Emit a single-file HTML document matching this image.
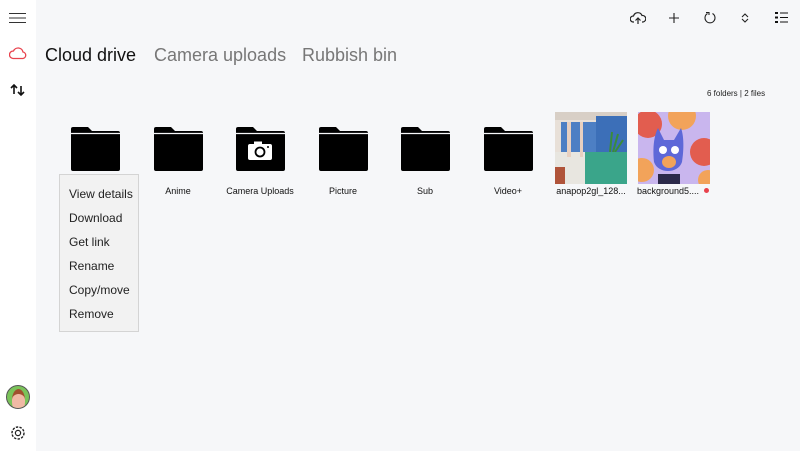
<!DOCTYPE html>
<html><head><style>
body{margin:0;width:800px;height:451px;overflow:hidden;background:#f6f7f9;font-family:"Liberation Sans",sans-serif;position:relative}
.side{position:absolute;left:0;top:0;width:36px;height:451px;background:#fff}
.abs{position:absolute}
.tab{position:absolute;top:45px;font-size:18px;color:#777}
.fold{position:absolute;top:127px;width:49px;height:44px}
.lbl{position:absolute;top:186px;font-size:9px;color:#111;text-align:center;width:80px}
.menu{position:absolute;left:59px;top:174px;width:78px;height:156px;background:#f2f2f2;border:1px solid #d4d4d4}
.menu div{position:absolute;left:9px;font-size:12px;color:#222}
</style></head><body>
<div class="side"></div>
<svg class="abs" style="left:9px;top:12px" width="18" height="12"><path d="M0 1.5H17M0 6H17M0 10.5H17" stroke="#333" stroke-width="1.1"/></svg>
<svg class="abs" style="left:9px;top:46px" width="18" height="14"><path d="M4 12.5H14A3.3 3.3 0 0 0 14 6 5 5 0 0 0 4.5 5 3.7 3.7 0 0 0 4 12.5Z" fill="none" stroke="#e8424d" stroke-width="1.3"/></svg>
<svg class="abs" style="left:10px;top:83px" width="16" height="14"><path d="M4 11V2M1 5L4 2 7 5M11 3V12M8 9L11 12 14 9" fill="none" stroke="#111" stroke-width="1.6"/></svg>
<div class="abs" style="left:6px;top:385px;width:24px;height:24px;border-radius:50%;background:#7ac35a;border:1px solid #555;box-sizing:border-box;overflow:hidden"><div style="margin:3px 0 0 5px;width:13px;height:17px;background:#f0b9a5;border-radius:50% 50% 40% 40%;border-top:5px solid #a0502e"></div></div>
<svg class="abs" style="left:9px;top:424px" width="18" height="18"><circle cx="9" cy="9" r="2.6" fill="none" stroke="#222" stroke-width="1.2"/><circle cx="9" cy="9" r="6" fill="none" stroke="#222" stroke-width="1.4" stroke-dasharray="2.4 1.3"/></svg>

<div class="tab" style="left:45px;color:#111">Cloud drive</div>
<div class="tab" style="left:154px">Camera uploads</div>
<div class="tab" style="left:302px">Rubbish bin</div>

<svg class="abs" style="left:630px;top:11px" width="16" height="14"><path d="M4 11H3A3 3 0 0 1 3.5 5 4.5 4.5 0 0 1 12 4.5 3 3 0 0 1 13 11H12M8 13V7M5.5 9.5L8 7 10.5 9.5" fill="none" stroke="#222" stroke-width="1.2"/></svg>
<svg class="abs" style="left:668px;top:12px" width="12" height="12"><path d="M6 1V11M1 6H11" stroke="#222" stroke-width="1.1"/></svg>
<svg class="abs" style="left:703px;top:11px" width="14" height="14"><path d="M4.5 2.5A5 5 0 1 0 9.5 2.5" fill="none" stroke="#222" stroke-width="1.1"/><path d="M3 1.5H6V4" fill="none" stroke="#222" stroke-width="1.1"/></svg>
<svg class="abs" style="left:740px;top:12px" width="10" height="12"><path d="M2 5L5 2 8 5M2 7L5 10 8 7" fill="none" stroke="#222" stroke-width="1.1"/></svg>
<svg class="abs" style="left:775px;top:12px" width="14" height="12"><path d="M0 1H3M0 5.5H3M0 10H3" stroke="#111" stroke-width="2"/><path d="M5 1H13M5 5.5H13M5 10H13" stroke="#111" stroke-width="1.1"/></svg>

<div class="abs" style="left:707px;top:89px;font-size:8px;color:#222">6 folders | 2 files</div>

<svg width="0" height="0" style="position:absolute"><defs><path id="f" d="M2 0H17L21 4H47A2 2 0 0 1 49 6V42A2 2 0 0 1 47 44H2A2 2 0 0 1 0 42V2A2 2 0 0 1 2 0Z"/></defs></svg>
<svg class="fold" style="left:71px"><use href="#f"/><path d="M0 6.5H49" stroke="#f6f7f9" stroke-width="1.2"/></svg>
<svg class="fold" style="left:154px"><use href="#f"/><path d="M0 6.5H49" stroke="#f6f7f9" stroke-width="1.2"/></svg>
<svg class="fold" style="left:236px"><use href="#f"/><path d="M0 6.5H49" stroke="#f6f7f9" stroke-width="1.2"/><rect x="12" y="17" width="24" height="16" rx="2" fill="#fff"/><rect x="18" y="14.5" width="8" height="4" fill="#fff"/><circle cx="24" cy="25" r="4.5" fill="none" stroke="#000" stroke-width="1.8"/><circle cx="32" cy="20" r="1" fill="#000"/></svg>
<svg class="fold" style="left:319px"><use href="#f"/><path d="M0 6.5H49" stroke="#f6f7f9" stroke-width="1.2"/></svg>
<svg class="fold" style="left:401px"><use href="#f"/><path d="M0 6.5H49" stroke="#f6f7f9" stroke-width="1.2"/></svg>
<svg class="fold" style="left:484px"><use href="#f"/><path d="M0 6.5H49" stroke="#f6f7f9" stroke-width="1.2"/></svg>

<div class="lbl" style="left:138px">Anime</div>
<div class="lbl" style="left:220px">Camera Uploads</div>
<div class="lbl" style="left:303px">Picture</div>
<div class="lbl" style="left:385px">Sub</div>
<div class="lbl" style="left:468px">Video+</div>

<svg class="abs" style="left:555px;top:112px" width="72" height="72"><rect width="72" height="72" fill="#e8e0d8"/><rect x="0" y="0" width="72" height="8" fill="#d8cfc6"/><rect x="6" y="10" width="35" height="30" fill="#4d7fc4"/><rect x="41" y="4" width="31" height="36" fill="#3c6fb8"/><path d="M55 40L57 20M58 40L63 22M60 40L68 28" stroke="#3a8c3a" stroke-width="2"/><rect x="22" y="40" width="50" height="32" fill="#3aa58a"/><rect x="0" y="40" width="30" height="32" fill="#e8e6e0"/><rect x="12" y="10" width="4" height="35" fill="#e8d0c0"/><rect x="25" y="10" width="3" height="35" fill="#e8d0c0"/><rect x="0" y="55" width="10" height="17" fill="#b0543a"/></svg>
<svg class="abs" style="left:638px;top:112px" width="72" height="72"><rect width="72" height="72" fill="#c9b6ee"/><circle cx="10" cy="12" r="14" fill="#e25d4f"/><circle cx="44" cy="4" r="14" fill="#f2a35a"/><circle cx="66" cy="40" r="14" fill="#e25d4f"/><circle cx="4" cy="58" r="12" fill="#f2a35a"/><circle cx="70" cy="68" r="10" fill="#f2a35a"/><path d="M16 50C14 30 18 20 20 16L26 28H36L43 16C46 24 46 38 44 50C40 62 20 62 16 50Z" fill="#5e68d8"/><circle cx="25" cy="38" r="4" fill="#fff"/><circle cx="37" cy="38" r="4" fill="#fff"/><ellipse cx="31" cy="50" rx="7" ry="6" fill="#f2a35a"/><path d="M20 72V62H42V72Z" fill="#2c2a4a"/></svg>
<div class="lbl" style="left:551px;width:80px">anapop2gl_128...</div>
<div class="lbl" style="left:632px;width:72px">background5....</div>
<div class="abs" style="left:704px;top:188px;width:5px;height:5px;border-radius:50%;background:#e8424d"></div>

<div class="menu">
<div style="top:12px">View details</div>
<div style="top:36px">Download</div>
<div style="top:60px">Get link</div>
<div style="top:84px">Rename</div>
<div style="top:108px">Copy/move</div>
<div style="top:132px">Remove</div>
</div>
</body></html>
